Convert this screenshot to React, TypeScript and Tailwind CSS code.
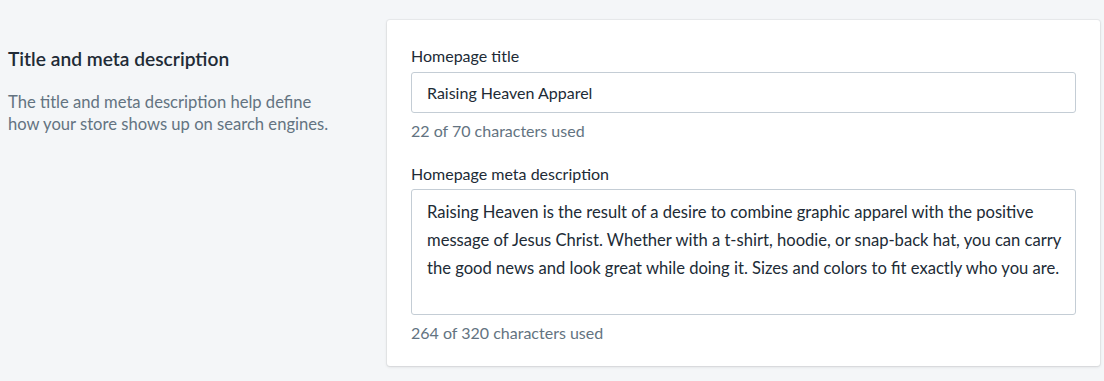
import React from "react";

export default function App() {
  const font = { fontFamily: "Lato, 'Noto Sans', sans-serif" };
  return (
    <div className="w-[1104px] h-[381px] bg-[#f4f6f8] flex items-start pt-[20px]" style={font}>
      <div className="w-[387px] shrink-0 pl-[8px] pt-[25px]">
        <h2 className="text-[19.2px] leading-[28px] font-semibold text-[#212b36]">Title and meta description</h2>
        <p className="mt-[18px] max-w-[335px] text-[16.6px] leading-[22px] text-[#637381]">
          The title and meta description help define how your store shows up on search engines.
        </p>
      </div>
      <div className="w-[713px] bg-white rounded-[3px] shadow-[0_0_0_1px_rgba(63,63,68,0.05),0_1px_3px_0_rgba(63,63,68,0.15)] px-[24px] pt-[24px] pb-[21px]">
        <div className="text-[16px] leading-[24px] text-[#212b36]">Homepage title</div>
        <div className="mt-[4px] h-[41px] border border-[#c4cdd5] rounded-[3px] flex items-center px-[15px] text-[16px] text-[#212b36]">
          Raising Heaven Apparel
        </div>
        <div className="mt-[6px] text-[16px] leading-[24px] text-[#637381]">22 of 70 characters used</div>
        <div className="mt-[19px] text-[16px] leading-[24px] text-[#212b36]">Homepage meta description</div>
        <div className="mt-[3px] h-[126px] border border-[#c4cdd5] rounded-[3px] px-[15px] pt-[8px] text-[16.6px] leading-[28px] text-[#212b36] whitespace-nowrap">
          <div>Raising Heaven is the result of a desire to combine graphic apparel with the positive</div>
          <div>message of Jesus Christ. Whether with a t-shirt, hoodie, or snap-back hat, you can carry</div>
          <div>the good news and look great while doing it. Sizes and colors to fit exactly who you are.</div>
        </div>
        <div className="mt-[6px] text-[16px] leading-[24px] text-[#637381]">264 of 320 characters used</div>
      </div>
    </div>
  );
}
